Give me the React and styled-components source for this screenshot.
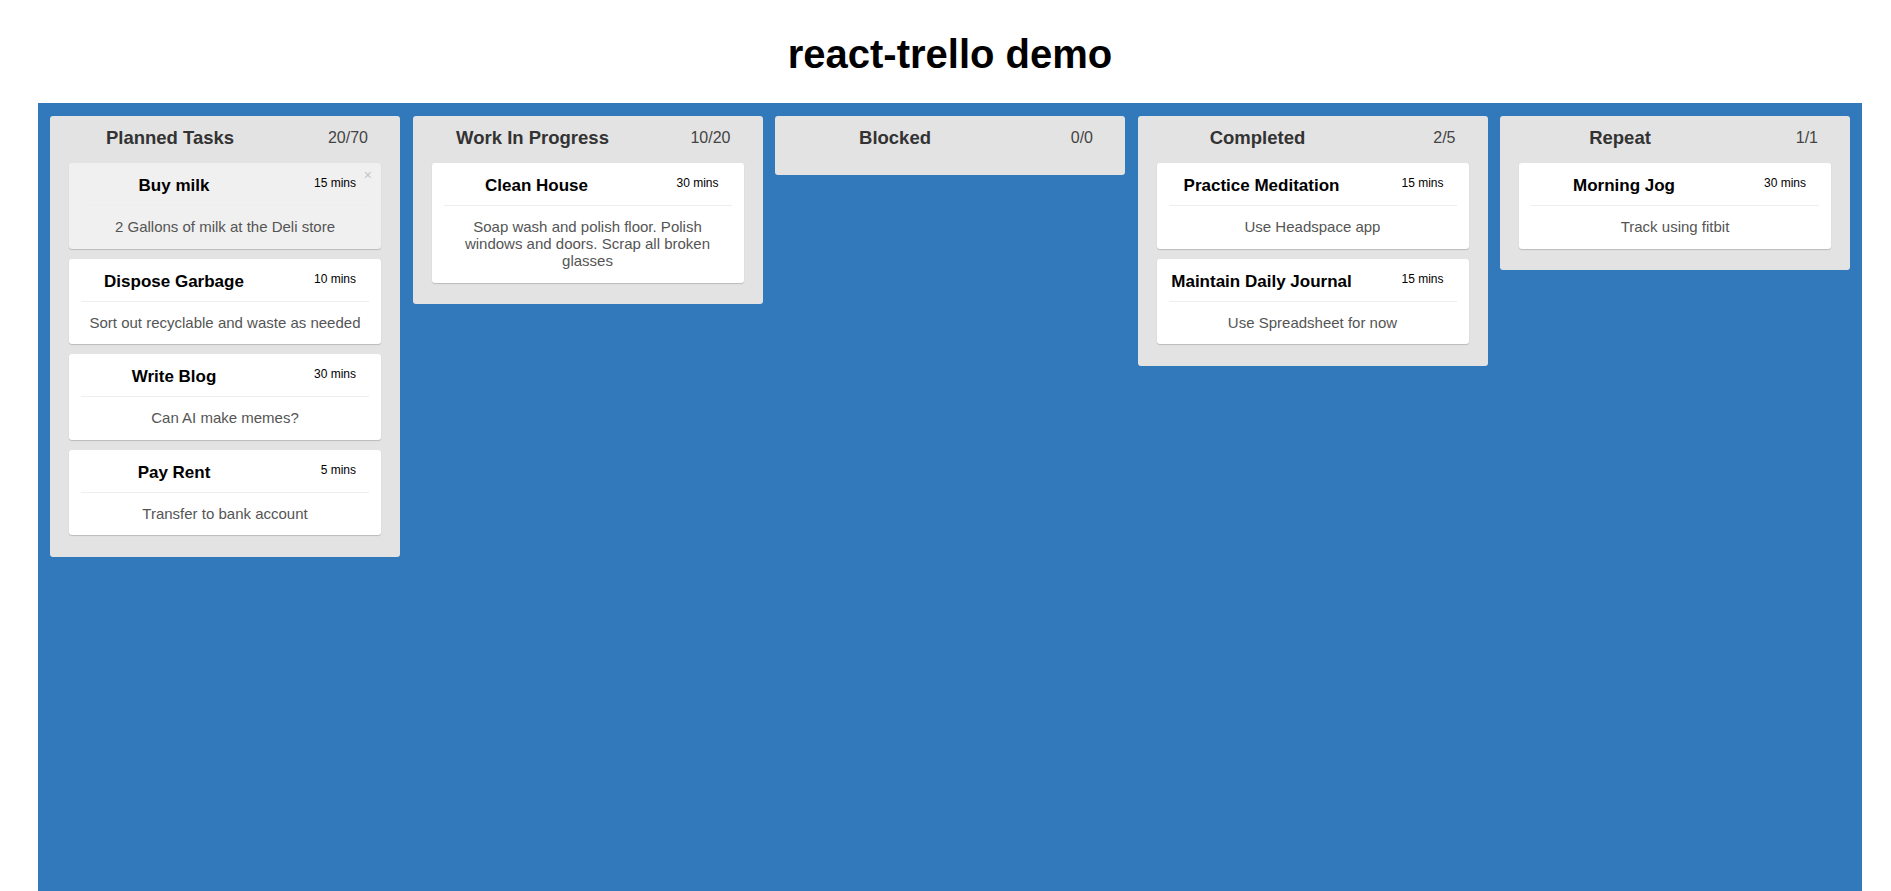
import React from "react";
import styled, {createGlobalStyle} from "styled-components";

const lanes = [
    {
        id: "planned",
        title: "Planned Tasks",
        label: "20/70",
        cards: [
            {title: "Buy milk", label: "15 mins", description: "2 Gallons of milk at the Deli store", hover: true},
            {title: "Dispose Garbage", label: "10 mins", description: "Sort out recyclable and waste as needed"},
            {title: "Write Blog", label: "30 mins", description: "Can AI make memes?"},
            {title: "Pay Rent", label: "5 mins", description: "Transfer to bank account"},
        ],
    },
    {
        id: "wip",
        title: "Work In Progress",
        label: "10/20",
        cards: [
            {
                title: "Clean House",
                label: "30 mins",
                description: "Soap wash and polish floor. Polish windows and doors. Scrap all broken glasses",
            },
        ],
    },
    {id: "blocked", title: "Blocked", label: "0/0", cards: []},
    {
        id: "completed",
        title: "Completed",
        label: "2/5",
        cards: [
            {title: "Practice Meditation", label: "15 mins", description: "Use Headspace app"},
            {title: "Maintain Daily Journal", label: "15 mins", description: "Use Spreadsheet for now"},
        ],
    },
    {
        id: "repeat",
        title: "Repeat",
        label: "1/1",
        cards: [{title: "Morning Jog", label: "30 mins", description: "Track using fitbit"}],
    },
];

function App() {
    return (
        <Page>
            <GlobalStyle/>
            <Heading>react-trello demo</Heading>
            <Board>
                {lanes.map((lane) => (
                    <Lane key={lane.id}>
                        <LaneHeader>
                            <LaneTitle>{lane.title}</LaneTitle>
                            <LaneLabel>{lane.label}</LaneLabel>
                        </LaneHeader>
                        {lane.cards.length > 0 && (
                            <CardList>
                                {lane.cards.map((card) => (
                                    <Card key={card.title} $hover={card.hover}>
                                        <CardHeader>
                                            <CardTitle>{card.title}</CardTitle>
                                            <CardLabel>{card.label}</CardLabel>
                                        </CardHeader>
                                        <Description>{card.description}</Description>
                                        {card.hover && <Close>×</Close>}
                                    </Card>
                                ))}
                            </CardList>
                        )}
                    </Lane>
                ))}
            </Board>
        </Page>
    );
}

export default App;

// 스타일
const GlobalStyle = createGlobalStyle`
    html, body {
        margin: 0;
        padding: 0;
        background: #fff;
        font-family: "Liberation Sans", Arial, sans-serif;
    }
`;
const Page = styled.div`
    padding: 31px 29px 0 38px;
    height: 891px;
    box-sizing: border-box;
    display: flex;
    flex-direction: column;
    overflow: hidden;
`;
const Heading = styled.h1`
    margin: 0 0 26px;
    text-align: center;
    font-size: 40px;
    line-height: 46px;
    font-weight: 700;
    color: #000;
`;
const Board = styled.div`
    flex: 1;
    background-color: #3179ba;
    padding: 13px 12px;
    display: flex;
    align-items: flex-start;
    gap: 12.5px;
`;
const Lane = styled.section`
    width: 350px;
    flex-shrink: 0;
    box-sizing: border-box;
    background-color: #e3e3e3;
    border-radius: 3px;
    padding: 10px 19px 21.5px;
`;
const LaneHeader = styled.header`
    display: flex;
    align-items: center;
    margin: 0 -19px;
    padding: 0 32px 3px 0;
    height: 24px;
    line-height: 24px;
`;
const LaneTitle = styled.span`
    width: 240px;
    text-align: center;
    font-size: 18.5px;
    font-weight: 700;
    color: #333;
`;
const LaneLabel = styled.span`
    margin-left: auto;
    font-size: 16px;
    color: #444;
`;
const CardList = styled.div`
    margin-top: 10px;
    display: flex;
    flex-direction: column;
    gap: 10px;
`;
const Card = styled.article`
    position: relative;
    background-color: ${(p) => (p.$hover ? "#f0f0f0" : "#fff")};
    border-radius: 3px;
    box-shadow: 0 1px 1px rgba(0, 0, 0, 0.18);
    padding: 10px 12px 13.5px;
`;
const CardHeader = styled.div`
    display: flex;
    align-items: flex-start;
    height: 32px;
    border-bottom: 1px solid #eee;
`;
const CardTitle = styled.span`
    width: 186px;
    text-align: center;
    font-size: 17px;
    line-height: 26px;
    font-weight: 700;
    color: #000;
    white-space: nowrap;
`;
const CardLabel = styled.span`
    margin-left: auto;
    margin-right: 13px;
    padding-top: 3px;
    font-size: 12px;
    line-height: 14px;
    color: #000;
`;
const Description = styled.p`
    margin: 12px 0 0;
    text-align: center;
    font-size: 15px;
    line-height: 17px;
    color: #555;
`;
const Close = styled.span`
    position: absolute;
    top: 5px;
    right: 9px;
    font-size: 14px;
    line-height: 14px;
    color: #c4c4c4;
`;
